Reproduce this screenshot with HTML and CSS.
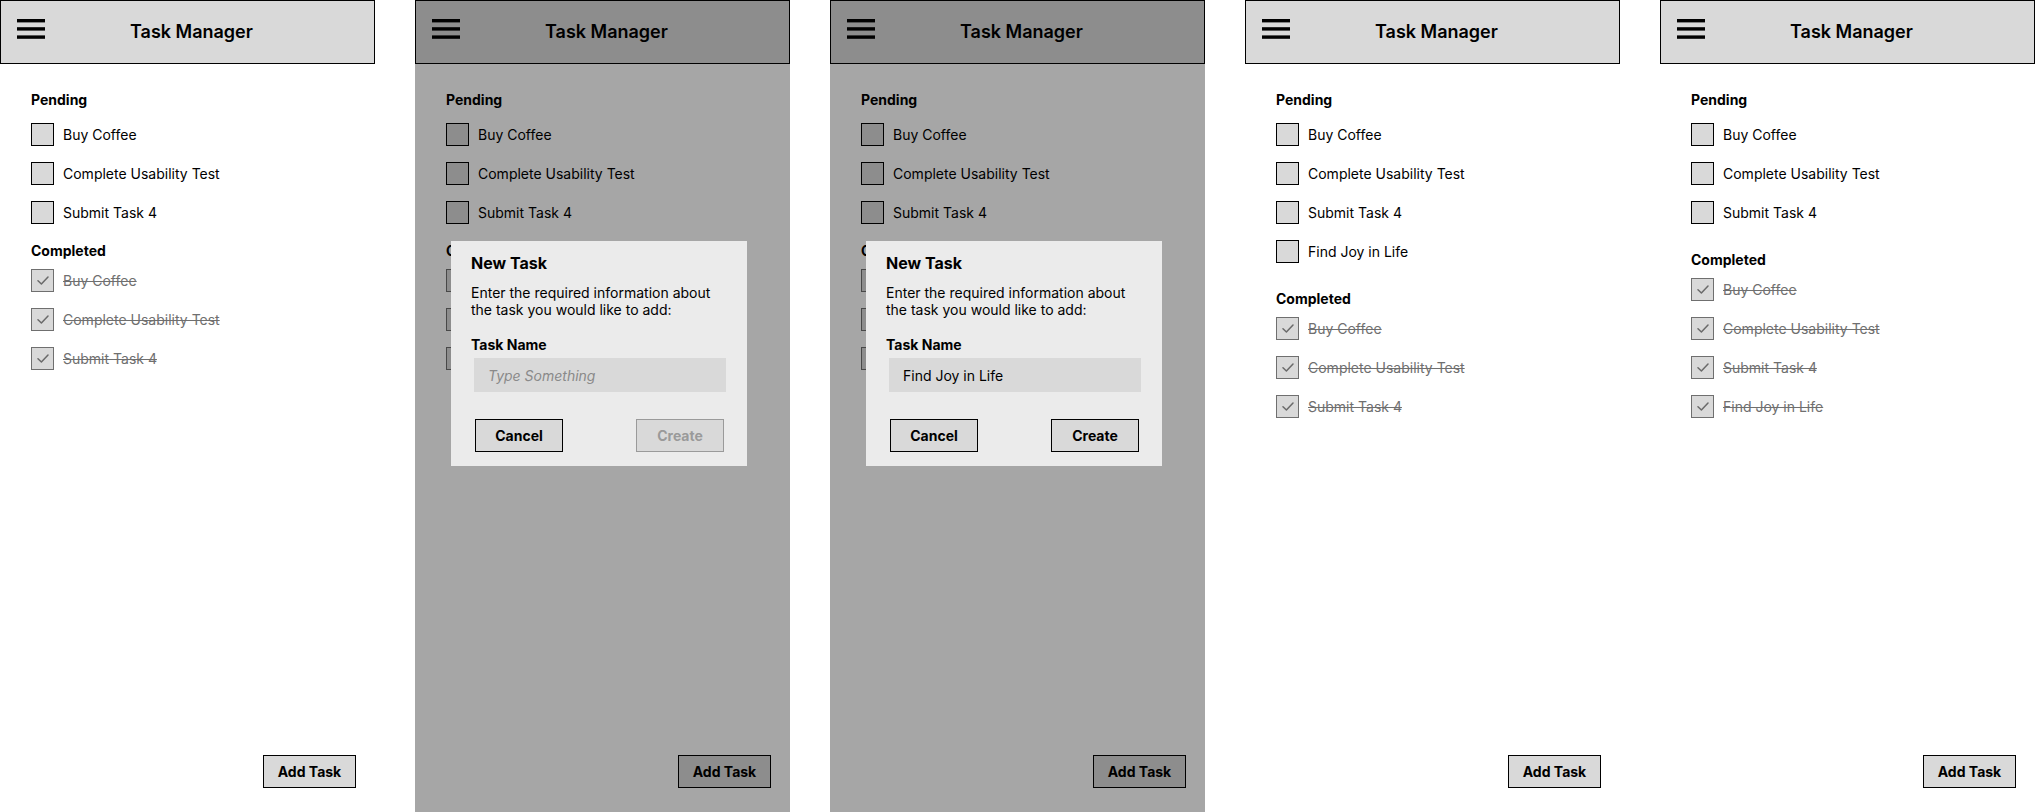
FILE: index.html
```html
<!DOCTYPE html>
<html lang="en">
<head>
<meta charset="utf-8">
<title>Task Manager</title>
<link rel="stylesheet" href="styles.css">
</head>
<body>

<!-- Screen 1 -->
<section class="phone">
  <header class="topbar">
    <svg class="menu" viewBox="0 0 28 20"><rect x="0" y="0" width="28" height="3.4"/><rect x="0" y="8.2" width="28" height="3.4"/><rect x="0" y="16.4" width="28" height="3.4"/></svg>
    <h1 class="title">Task Manager</h1>
  </header>
  <main class="content">
    <h2 class="section-title">Pending</h2>
    <ul class="tasks">
      <li class="task"><span class="box"></span><span class="label">Buy Coffee</span></li>
      <li class="task"><span class="box"></span><span class="label">Complete Usability Test</span></li>
      <li class="task"><span class="box"></span><span class="label">Submit Task 4</span></li>
    </ul>
    <h2 class="section-title completed-title">Completed</h2>
    <ul class="tasks done">
      <li class="task"><span class="box"><svg class="tick" viewBox="0 0 12 9"><polyline points="1,4.8 4.4,8 11,1"/></svg></span><span class="label">Buy Coffee</span></li>
      <li class="task"><span class="box"><svg class="tick" viewBox="0 0 12 9"><polyline points="1,4.8 4.4,8 11,1"/></svg></span><span class="label">Complete Usability Test</span></li>
      <li class="task"><span class="box"><svg class="tick" viewBox="0 0 12 9"><polyline points="1,4.8 4.4,8 11,1"/></svg></span><span class="label">Submit Task 4</span></li>
    </ul>
  </main>
  <button class="btn add-btn">Add Task</button>
</section>

<!-- Screen 2 -->
<section class="phone">
  <header class="topbar">
    <svg class="menu" viewBox="0 0 28 20"><rect x="0" y="0" width="28" height="3.4"/><rect x="0" y="8.2" width="28" height="3.4"/><rect x="0" y="16.4" width="28" height="3.4"/></svg>
    <h1 class="title">Task Manager</h1>
  </header>
  <main class="content">
    <h2 class="section-title">Pending</h2>
    <ul class="tasks">
      <li class="task"><span class="box"></span><span class="label">Buy Coffee</span></li>
      <li class="task"><span class="box"></span><span class="label">Complete Usability Test</span></li>
      <li class="task"><span class="box"></span><span class="label">Submit Task 4</span></li>
    </ul>
    <h2 class="section-title completed-title">Completed</h2>
    <ul class="tasks done">
      <li class="task"><span class="box"><svg class="tick" viewBox="0 0 12 9"><polyline points="1,4.8 4.4,8 11,1"/></svg></span><span class="label">Buy Coffee</span></li>
      <li class="task"><span class="box"><svg class="tick" viewBox="0 0 12 9"><polyline points="1,4.8 4.4,8 11,1"/></svg></span><span class="label">Complete Usability Test</span></li>
      <li class="task"><span class="box"><svg class="tick" viewBox="0 0 12 9"><polyline points="1,4.8 4.4,8 11,1"/></svg></span><span class="label">Submit Task 4</span></li>
    </ul>
  </main>
  <button class="btn add-btn">Add Task</button>
  <div class="scrim"></div>
  <div class="dialog">
    <h3 class="dialog-title">New Task</h3>
    <p class="dialog-text">Enter the required information about the task you would like to add:</p>
    <label class="field-label">Task Name</label>
    <input class="field" type="text" placeholder="Type Something">
    <div class="actions">
      <button class="btn">Cancel</button>
      <button class="btn disabled">Create</button>
    </div>
  </div>
</section>

<!-- Screen 3 -->
<section class="phone">
  <header class="topbar">
    <svg class="menu" viewBox="0 0 28 20"><rect x="0" y="0" width="28" height="3.4"/><rect x="0" y="8.2" width="28" height="3.4"/><rect x="0" y="16.4" width="28" height="3.4"/></svg>
    <h1 class="title">Task Manager</h1>
  </header>
  <main class="content">
    <h2 class="section-title">Pending</h2>
    <ul class="tasks">
      <li class="task"><span class="box"></span><span class="label">Buy Coffee</span></li>
      <li class="task"><span class="box"></span><span class="label">Complete Usability Test</span></li>
      <li class="task"><span class="box"></span><span class="label">Submit Task 4</span></li>
    </ul>
    <h2 class="section-title completed-title">Completed</h2>
    <ul class="tasks done">
      <li class="task"><span class="box"><svg class="tick" viewBox="0 0 12 9"><polyline points="1,4.8 4.4,8 11,1"/></svg></span><span class="label">Buy Coffee</span></li>
      <li class="task"><span class="box"><svg class="tick" viewBox="0 0 12 9"><polyline points="1,4.8 4.4,8 11,1"/></svg></span><span class="label">Complete Usability Test</span></li>
      <li class="task"><span class="box"><svg class="tick" viewBox="0 0 12 9"><polyline points="1,4.8 4.4,8 11,1"/></svg></span><span class="label">Submit Task 4</span></li>
    </ul>
  </main>
  <button class="btn add-btn">Add Task</button>
  <div class="scrim"></div>
  <div class="dialog">
    <h3 class="dialog-title">New Task</h3>
    <p class="dialog-text">Enter the required information about the task you would like to add:</p>
    <label class="field-label">Task Name</label>
    <input class="field" type="text" value="Find Joy in Life">
    <div class="actions">
      <button class="btn">Cancel</button>
      <button class="btn">Create</button>
    </div>
  </div>
</section>

<!-- Screen 4 -->
<section class="phone wide-gap">
  <header class="topbar">
    <svg class="menu" viewBox="0 0 28 20"><rect x="0" y="0" width="28" height="3.4"/><rect x="0" y="8.2" width="28" height="3.4"/><rect x="0" y="16.4" width="28" height="3.4"/></svg>
    <h1 class="title">Task Manager</h1>
  </header>
  <main class="content">
    <h2 class="section-title">Pending</h2>
    <ul class="tasks">
      <li class="task"><span class="box"></span><span class="label">Buy Coffee</span></li>
      <li class="task"><span class="box"></span><span class="label">Complete Usability Test</span></li>
      <li class="task"><span class="box"></span><span class="label">Submit Task 4</span></li>
      <li class="task"><span class="box"></span><span class="label">Find Joy in Life</span></li>
    </ul>
    <h2 class="section-title completed-title">Completed</h2>
    <ul class="tasks done">
      <li class="task"><span class="box"><svg class="tick" viewBox="0 0 12 9"><polyline points="1,4.8 4.4,8 11,1"/></svg></span><span class="label">Buy Coffee</span></li>
      <li class="task"><span class="box"><svg class="tick" viewBox="0 0 12 9"><polyline points="1,4.8 4.4,8 11,1"/></svg></span><span class="label">Complete Usability Test</span></li>
      <li class="task"><span class="box"><svg class="tick" viewBox="0 0 12 9"><polyline points="1,4.8 4.4,8 11,1"/></svg></span><span class="label">Submit Task 4</span></li>
    </ul>
  </main>
  <button class="btn add-btn">Add Task</button>
</section>

<!-- Screen 5 -->
<section class="phone wide-gap">
  <header class="topbar">
    <svg class="menu" viewBox="0 0 28 20"><rect x="0" y="0" width="28" height="3.4"/><rect x="0" y="8.2" width="28" height="3.4"/><rect x="0" y="16.4" width="28" height="3.4"/></svg>
    <h1 class="title">Task Manager</h1>
  </header>
  <main class="content">
    <h2 class="section-title">Pending</h2>
    <ul class="tasks">
      <li class="task"><span class="box"></span><span class="label">Buy Coffee</span></li>
      <li class="task"><span class="box"></span><span class="label">Complete Usability Test</span></li>
      <li class="task"><span class="box"></span><span class="label">Submit Task 4</span></li>
    </ul>
    <h2 class="section-title completed-title">Completed</h2>
    <ul class="tasks done">
      <li class="task"><span class="box"><svg class="tick" viewBox="0 0 12 9"><polyline points="1,4.8 4.4,8 11,1"/></svg></span><span class="label">Buy Coffee</span></li>
      <li class="task"><span class="box"><svg class="tick" viewBox="0 0 12 9"><polyline points="1,4.8 4.4,8 11,1"/></svg></span><span class="label">Complete Usability Test</span></li>
      <li class="task"><span class="box"><svg class="tick" viewBox="0 0 12 9"><polyline points="1,4.8 4.4,8 11,1"/></svg></span><span class="label">Submit Task 4</span></li>
      <li class="task"><span class="box"><svg class="tick" viewBox="0 0 12 9"><polyline points="1,4.8 4.4,8 11,1"/></svg></span><span class="label">Find Joy in Life</span></li>
    </ul>
  </main>
  <button class="btn add-btn">Add Task</button>
</section>

</body>
</html>
```

FILE: styles.css
```css
* {
  box-sizing: border-box;
}

html, body {
  margin: 0;
  padding: 0;
  background: #ffffff;
}

body {
  display: flex;
  gap: 40px;
  font-family: Inter, "Noto Sans", "Liberation Sans", sans-serif;
  color: #000;
  overflow: hidden;
}

.phone {
  flex: none;
  width: 375px;
  height: 812px;
  position: relative;
  display: flex;
  flex-direction: column;
  background: #ffffff;
  overflow: hidden;
}

/* Top bar */
.topbar {
  flex: none;
  height: 64px;
  border: 1px solid #000;
  background: #d9d9d9;
  display: flex;
  align-items: center;
  padding-left: 16px;
}

.menu {
  width: 28px;
  height: 20px;
  margin-bottom: 6px;
  fill: #000;
}

.title {
  margin: 0 0 0 85px;
  font-size: 18px;
  font-weight: 600;
  line-height: 22px;
}

/* Lists */
.content {
  flex: 1;
  padding: 27px 0 0 31px;
}

.section-title {
  margin: 0 0 15px;
  font-size: 14px;
  font-weight: 700;
  line-height: 17px;
}

.completed-title {
  margin-top: 18px;
  margin-bottom: 10px;
}

.wide-gap .completed-title {
  margin-top: 27px;
}

.tasks {
  list-style: none;
  margin: 0;
  padding: 0;
  display: flex;
  flex-direction: column;
  gap: 16px;
}

.task {
  display: flex;
  align-items: center;
  height: 23px;
  font-size: 14px;
  line-height: 17px;
}

.box {
  flex: none;
  width: 23px;
  height: 23px;
  border: 1px solid #000;
  background: #d9d9d9;
  margin-right: 9px;
  display: flex;
  align-items: center;
  justify-content: center;
}

.done .box {
  border-color: #6f6f6f;
}

.tick {
  width: 12px;
  height: 9px;
  fill: none;
  stroke: #6a6a6a;
  stroke-width: 1.5;
  stroke-linecap: round;
  stroke-linejoin: round;
}

.done .label {
  color: #6f6f6f;
  text-decoration: line-through;
}

/* Buttons */
.btn {
  width: 88px;
  height: 33px;
  border: 1px solid #000;
  background: #d9d9d9;
  font-family: Inter, "Noto Sans", "Liberation Sans", sans-serif;
  font-size: 14px;
  font-weight: 700;
  color: #000;
  padding: 0;
  border-radius: 0;
}

.btn.disabled {
  border-color: #9a9a9a;
  color: #9a9a9a;
}

.add-btn {
  flex: none;
  width: 93px;
  align-self: flex-end;
  margin: 0 19px 24px 0;
}

/* Modal */
.scrim {
  position: absolute;
  inset: 0;
  background: rgba(0, 0, 0, 0.35);
}

.dialog {
  position: absolute;
  left: 36px;
  top: 241px;
  width: 296px;
  padding: 13px 20px 14px;
  background: #ebebeb;
  display: flex;
  flex-direction: column;
}

.dialog-title {
  margin: 0;
  font-size: 16px;
  font-weight: 700;
  line-height: 19px;
}

.dialog-text {
  margin: 11px 0 0;
  font-size: 14px;
  line-height: 17px;
}

.field-label {
  margin-top: 18px;
  font-size: 14px;
  font-weight: 700;
  line-height: 17px;
}

.field {
  margin: 5px 0 0 3px;
  width: 252px;
  height: 34px;
  border: none;
  outline: none;
  background: #d9d9d9;
  padding: 0 0 0 14px;
  font-family: Inter, "Noto Sans", "Liberation Sans", sans-serif;
  font-size: 14px;
  color: #000;
}

.field::placeholder {
  color: #8a8a8a;
  font-style: italic;
}

.actions {
  display: flex;
  justify-content: space-between;
  margin-top: 27px;
  padding: 0 3px 0 4px;
}
```
